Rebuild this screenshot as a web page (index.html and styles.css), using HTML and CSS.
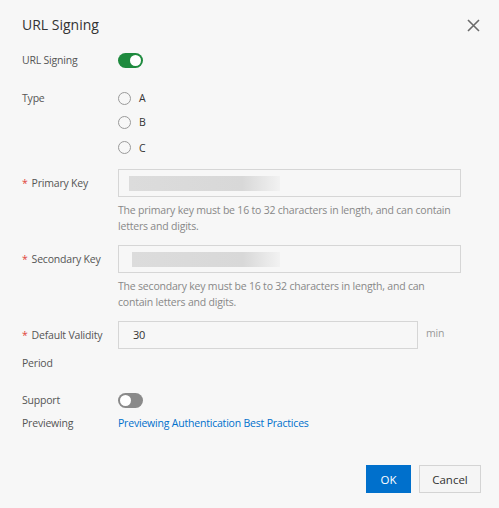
FILE: index.html
```html
<!DOCTYPE html>
<html>
<head>
<link rel="stylesheet" href="styles.css">
</head>
<body>
<div class="dialog">
  <div class="head">
    <h1>URL Signing</h1>
    <span class="close">
      <svg width="13" height="13" viewBox="0 0 13 13"><path d="M1 1L12 12M12 1L1 12" stroke="#6b6b6b" stroke-width="1.6"/></svg>
    </span>
  </div>

  <div class="row r-sign">
    <div class="label">URL Signing</div>
    <div class="field"><span class="switch on"></span></div>
  </div>

  <div class="row r-type">
    <div class="label">Type</div>
    <div class="field radios">
      <label class="radio"><i></i>A</label>
      <label class="radio"><i></i>B</label>
      <label class="radio"><i></i>C</label>
    </div>
  </div>

  <div class="row r-key">
    <div class="label req">Primary Key</div>
    <div class="field">
      <div class="input"><span class="mask"></span></div>
      <p class="hint">The primary key must be 16 to 32 characters in length, and can contain letters and digits.</p>
    </div>
  </div>

  <div class="row r-key">
    <div class="label req">Secondary Key</div>
    <div class="field">
      <div class="input"><span class="mask m2"></span></div>
      <p class="hint">The secondary key must be 16 to 32 characters in length, and can contain letters and digits.</p>
    </div>
  </div>

  <div class="row r-valid">
    <div class="label req">Default Validity Period</div>
    <div class="field inline">
      <div class="input short">30</div>
      <span class="unit">min</span>
    </div>
  </div>

  <div class="row r-preview">
    <div class="label">Support Previewing</div>
    <div class="field">
      <div class="line"><span class="switch"></span></div>
      <div class="line"><a href="#">Previewing Authentication Best Practices</a></div>
    </div>
  </div>

  <div class="foot">
    <button class="btn primary">OK</button>
    <button class="btn">Cancel</button>
  </div>
</div>
</body>
</html>
```

FILE: styles.css
```css
body {
  margin: 0;
  background: #f7f7f7;
  font-family: "Open Sans", "Noto Sans", sans-serif;
  font-size: 10.5px;
  letter-spacing: -0.2px;
  color: #555;
}
.dialog {
  width: 499px;
  height: 508px;
  box-sizing: border-box;
  padding: 0 38px 0 22px;
}
.head {
  display: flex;
  align-items: center;
  justify-content: space-between;
  height: 48px;
  margin-right: -19px;
}
.head h1 {
  margin: 0;
  font-size: 14px;
  font-weight: normal;
  letter-spacing: 0;
  color: #333;
}
.close {
  display: flex;
  margin-top: 2px;
}
.row {
  display: flex;
}
.label {
  width: 96px;
  box-sizing: border-box;
  padding-right: 12px;
  flex: none;
  color: #555;
}
.label.req::before {
  content: "*";
  color: #e0443a;
  margin-right: 4px;
}
.field {
  flex: 1;
}
.r-sign {
  margin-top: 4px;
  line-height: 16px;
}
.r-sign .field {
  display: flex;
  align-items: center;
}
.switch {
  position: relative;
  display: inline-block;
  width: 25px;
  height: 15px;
  border-radius: 8px;
  background: #8a8a8a;
}
.switch::after {
  content: "";
  position: absolute;
  top: 2px;
  left: 2px;
  width: 11px;
  height: 11px;
  border-radius: 50%;
  background: #fff;
}
.switch.on {
  background: #1e8a3e;
}
.switch.on::after {
  left: 12px;
}
.r-type {
  margin-top: 18px;
}
.r-type .label {
  line-height: 24px;
}
.radio {
  display: flex;
  align-items: center;
  height: 24px;
  color: #333;
}
.radio i {
  width: 11px;
  height: 11px;
  border: 1px solid #9a9a9a;
  border-radius: 50%;
  margin-right: 8px;
}
.radio:last-child {
  height: 26px;
  padding-top: 1px;
  box-sizing: border-box;
}
.r-key {
  margin-top: 9px;
}
.r-key + .r-key {
  margin-top: 11px;
}
.r-key .label {
  line-height: 28px;
}
.input {
  height: 28px;
  box-sizing: border-box;
  border: 1px solid #d6d6d6;
  display: flex;
  align-items: center;
  padding-left: 10px;
  color: #333;
  font-size: 11px;
}
.mask {
  width: 151px;
  height: 15px;
  background: linear-gradient(to right, #dcdcdc, #d8d8d8 75%, #f2f2f2);
}
.mask.m2 {
  margin-left: 3px;
  width: 148px;
}
.hint {
  margin: 5px 0 0;
  line-height: 16px;
  color: #888;
}
.r-valid {
  margin-top: 11px;
  line-height: 28px;
}
.inline {
  display: flex;
  align-items: flex-start;
}
.input.short {
  width: 300px;
  padding-left: 14px;
}
.unit {
  margin-left: 8px;
  line-height: 24px;
  color: #999;
}
.r-preview {
  margin-top: 12px;
  line-height: 23px;
}
.line {
  height: 23px;
  display: flex;
  align-items: center;
}
a {
  color: #0070cc;
  text-decoration: none;
}
.foot {
  display: flex;
  justify-content: flex-end;
  gap: 8px;
  margin-top: 30px;
  margin-right: -20px;
}
.btn {
  width: 62px;
  height: 28px;
  padding: 0;
  border: 1px solid #d4d4d4;
  background: #f5f5f5;
  font-family: inherit;
  font-size: 11.5px;
  letter-spacing: 0;
  color: #333;
}
.btn.primary {
  width: 45px;
  border-color: #0070cc;
  background: #0070cc;
  color: #fff;
}
```
